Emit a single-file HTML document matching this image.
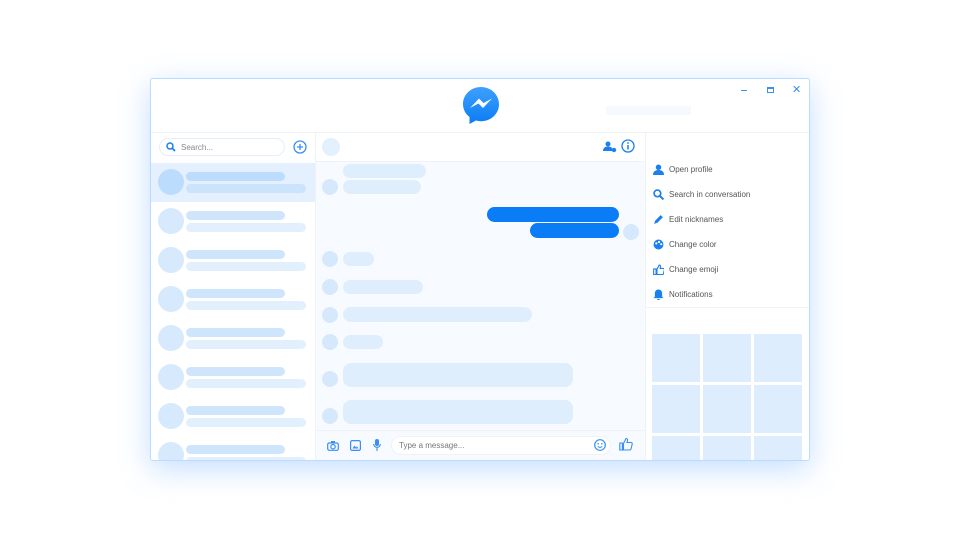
<!DOCTYPE html>
<html><head><style>
*{margin:0;padding:0;box-sizing:border-box}
body{width:960px;height:540px;background:#fff;font-family:"Liberation Sans",sans-serif;position:relative;overflow:hidden}
.a{position:absolute}
.win{left:150px;top:78px;width:660px;height:383px;border:1px solid #b9dcff;border-radius:3px;background:#fff;box-shadow:0 8px 30px rgba(90,160,255,.35);overflow:hidden}
.r{border-radius:8px}
.c{border-radius:50%}
.t{font-size:8px;color:#555}
</style></head><body>
<div class="a win">
 <div class="a" style="left:0;top:53px;width:660px;height:1px;background:#eef3f8"></div>
 <!-- logo -->
 <svg class="a" style="left:309px;top:6px" width="42" height="42" viewBox="0 0 42 42"><defs><linearGradient id="g" x1="0" y1="0" x2="0" y2="1"><stop offset="0" stop-color="#3ea0ff"/><stop offset="1" stop-color="#0a7cf5"/></linearGradient></defs><path d="M21 2C11 2 3 9.5 3 19c0 5.3 2.5 10 6.5 13v7l6.4-3.5c1.6.4 3.3.7 5.1.7 10 0 18-7.5 18-17S31 2 21 2z" fill="url(#g)"/><path d="M10 23l9-9.5 4.5 4.5 8.5-4.5-9 9.5-4.5-4.5z" fill="#fff"/></svg>
 <div class="a" style="left:455px;top:27px;width:85px;height:9px;background:#f6f9fd"></div>
 <div class="a" style="left:590px;top:11px;width:6px;height:1px;background:#3a8ef5"></div>
 <div class="a" style="left:616px;top:8px;width:7px;height:6px;border:1px solid #3a8ef5;border-top-width:2px"></div>
 <div class="a" style="left:641px;top:4px;font-size:11px;color:#3a8ef5">✕</div>
 <!-- sidebar -->
 <div class="a" style="left:164px;top:54px;width:1px;height:329px;background:#eef3f8"></div>
 <div class="a" style="left:8px;top:59px;width:126px;height:18px;border:1px solid #e6eef7;border-radius:9px"></div>
 <svg class="a" style="left:15px;top:63px" width="10" height="10" viewBox="0 0 10 10"><circle cx="4" cy="4" r="3" fill="none" stroke="#1a7ff0" stroke-width="1.5"/><path d="M6.3 6.3L9 9" stroke="#1a7ff0" stroke-width="1.8"/></svg>
 <div class="a t" style="left:30px;top:64px;color:#888">Search...</div>
 <svg class="a" style="left:142px;top:61px" width="14" height="14"><circle cx="7" cy="7" r="6" fill="none" stroke="#3a8ef5" stroke-width="1.3"/><path d="M7 4v6M4 7h6" stroke="#3a8ef5" stroke-width="1.3"/></svg>
 <div class="a" style="left:0;top:84px;width:164px;height:39px;background:#e4f0fd"></div>
 <div id="list"></div>
 <!-- chat -->
 <div class="a" style="left:165px;top:54px;width:329px;height:329px;background:#f7fbff"></div>
 <div class="a" style="left:165px;top:54px;width:329px;height:29px;background:#fff;border-bottom:1px solid #eef3f8"></div>
 <div class="a c" style="left:171px;top:59px;width:18px;height:18px;background:#e3f0fd"></div>
 <svg class="a" style="left:452px;top:62px" width="14" height="12"><circle cx="5" cy="3" r="2.5" fill="#1a7ff0"/><path d="M0 10c0-3 2-4.5 5-4.5s5 1.5 5 4.5z" fill="#1a7ff0"/><circle cx="11" cy="9" r="2.2" fill="#1a7ff0"/></svg>
 <svg class="a" style="left:470px;top:60px" width="14" height="14"><circle cx="7" cy="7" r="6" fill="none" stroke="#1a7ff0" stroke-width="1.3"/><path d="M7 6v4.5" stroke="#1a7ff0" stroke-width="1.5"/><circle cx="7" cy="4" r=".9" fill="#1a7ff0"/></svg>
 <div id="msgs"></div>
 <div class="a" style="left:165px;top:351px;width:329px;height:32px;background:#f7fbff;border-top:1px solid #eef3f8"></div>
 <svg class="a" style="left:176px;top:362px" width="12" height="10"><rect x=".7" y="2" width="10.6" height="7.3" rx="1.5" fill="none" stroke="#3a8ef5" stroke-width="1.2"/><circle cx="6" cy="5.7" r="2.2" fill="none" stroke="#3a8ef5" stroke-width="1.2"/><rect x="4" y="0" width="4" height="2" fill="#3a8ef5"/></svg>
 <svg class="a" style="left:199px;top:361px" width="11" height="11"><rect x=".6" y=".6" width="9.8" height="9.8" rx="1.5" fill="none" stroke="#3a8ef5" stroke-width="1.2"/><path d="M2.5 8.5l2-3 1.5 2 1-1.2 1.5 2.2z" fill="#3a8ef5"/></svg>
 <svg class="a" style="left:222px;top:360px" width="8" height="12"><rect x="2" y="0" width="4" height="7" rx="2" fill="#3a8ef5"/><path d="M.7 5a3.3 3.3 0 006.6 0M4 8.5V12" fill="none" stroke="#3a8ef5" stroke-width="1.1"/></svg>
 <div class="a" style="left:240px;top:357px;width:220px;height:19px;background:#fff;border:1px solid #eef3f8;border-radius:10px"></div>
 <div class="a t" style="left:248px;top:362px;color:#777">Type a message...</div>
 <svg class="a" style="left:443px;top:360px" width="12" height="12"><circle cx="6" cy="6" r="5.3" fill="none" stroke="#3a8ef5" stroke-width="1.2"/><circle cx="4.2" cy="4.8" r=".8" fill="#3a8ef5"/><circle cx="7.8" cy="4.8" r=".8" fill="#3a8ef5"/><path d="M3.8 7.4q2.2 2 4.4 0" fill="none" stroke="#3a8ef5" stroke-width="1"/></svg>
 <svg class="a" style="left:468px;top:358px" width="14" height="14" viewBox="0 0 14 14"><path d="M.8 6h2.6v7H.8zM4.5 6.5L7 1.5c1.2 0 1.8.8 1.5 2.2L8 5.5h4c.9 0 1.4.7 1.2 1.5l-1.2 5c-.2.7-.7 1-1.4 1H4.5z" fill="none" stroke="#3a8ef5" stroke-width="1.1"/></svg>
 <!-- right -->
 <div class="a" style="left:494px;top:54px;width:1px;height:329px;background:#eef3f8"></div>
 <div id="menu"></div>
 <div class="a" style="left:495px;top:228px;width:165px;height:1px;background:#eef3f8"></div>
 <div id="grid"></div>
</div>
<script>
var L='',i;
for(i=0;i<8;i++){var y=90+i*39;L+='<div class="a c" style="left:7px;top:'+y+'px;width:26px;height:26px;background:'+(i?'#d7e9fc':'#bcdcfd')+'"></div><div class="a" style="left:35px;top:'+(y+3)+'px;width:99px;height:9px;border-radius:5px;background:'+(i?'#cfe5fc':'#bcdcfd')+'"></div><div class="a" style="left:35px;top:'+(y+15)+'px;width:120px;height:9px;border-radius:5px;background:'+(i?'#e2effd':'#cce3fc')+'"></div>';}
document.getElementById('list').innerHTML=L;
var M='',b='#dfeefd',av='#d6e8fc';
function bub(x,y,w,h,c){M+='<div class="a r" style="left:'+(x-150)+'px;top:'+(y-78)+'px;width:'+w+'px;height:'+h+'px;background:'+c+'"></div>';}
function avt(cx,cy){M+='<div class="a c" style="left:'+(cx-150-8)+'px;top:'+(cy-78-8)+'px;width:16px;height:16px;background:'+av+'"></div>';}
bub(342,163,83,14,b);bub(342,179,78,14,b);avt(329,186);
bub(486,206,132,15,'#0a7cf5');bub(529,222,89,15,'#0a7cf5');avt(630,231);
avt(329,258);bub(342,251,31,14,b);
avt(329,286);bub(342,279,80,14,b);
avt(329,314);bub(342,306,189,15,b);
avt(329,341);bub(342,334,40,14,b);
avt(329,378);bub(342,362,230,24,b);
avt(329,415);bub(342,399,230,24,b);
document.getElementById('msgs').innerHTML=M;
var items=['Open profile','Search in conversation','Edit nicknames','Change color','Change emoji','Notifications'];
var ic=['<circle cx="5" cy="3" r="2.5" fill="#1a7ff0"/><path d="M0 10c0-3 2-4.5 5-4.5s5 1.5 5 4.5z" fill="#1a7ff0"/>',
'<circle cx="4" cy="4" r="3" fill="none" stroke="#1a7ff0" stroke-width="1.5"/><path d="M6.3 6.3L9.5 9.5" stroke="#1a7ff0" stroke-width="1.8"/>',
'<path d="M1 9l1-3 5-5 2 2-5 5z" fill="#1a7ff0"/>',
'<circle cx="5" cy="5" r="4.5" fill="#1a7ff0"/><circle cx="3" cy="4" r="1" fill="#fff"/><circle cx="5.5" cy="2.7" r="1" fill="#fff"/><circle cx="7.5" cy="4.7" r="1" fill="#fff"/>',
'<path d="M.6 4.5h2.2v5.2H.6zM3.6 4.8L5.6 1c1 0 1.4.6 1.2 1.7L6.5 4h3c.6 0 1 .5.9 1.1l-.9 3.7c-.1.5-.5.8-1 .8H3.6z" fill="none" stroke="#1a7ff0" stroke-width="1"/>',
'<path d="M5 .5c2 0 3.3 1.5 3.3 3.5v3l1.2 1.3H.5L1.7 7V4C1.7 2 3 .5 5 .5zM3.8 9h2.4a1.2 1.2 0 01-2.4 0z" fill="#1a7ff0"/>'];
var H='';
for(i=0;i<6;i++){var y=85+i*25;H+='<svg class="a" style="left:502px;top:'+y+'px" width="11" height="11" viewBox="0 0 10 10">'+ic[i]+'</svg><div class="a t" style="left:518px;top:'+(y+1)+'px">'+items[i]+'</div>';}
document.getElementById('menu').innerHTML=H;
var G='',xs=[501,552,603],ys=[255,306,357];
for(var r=0;r<3;r++)for(var c=0;c<3;c++)G+='<div class="a" style="left:'+xs[c]+'px;top:'+ys[r]+'px;width:48px;height:48px;background:#deedfd"></div>';
document.getElementById('grid').innerHTML=G;
</script>
</body></html>
